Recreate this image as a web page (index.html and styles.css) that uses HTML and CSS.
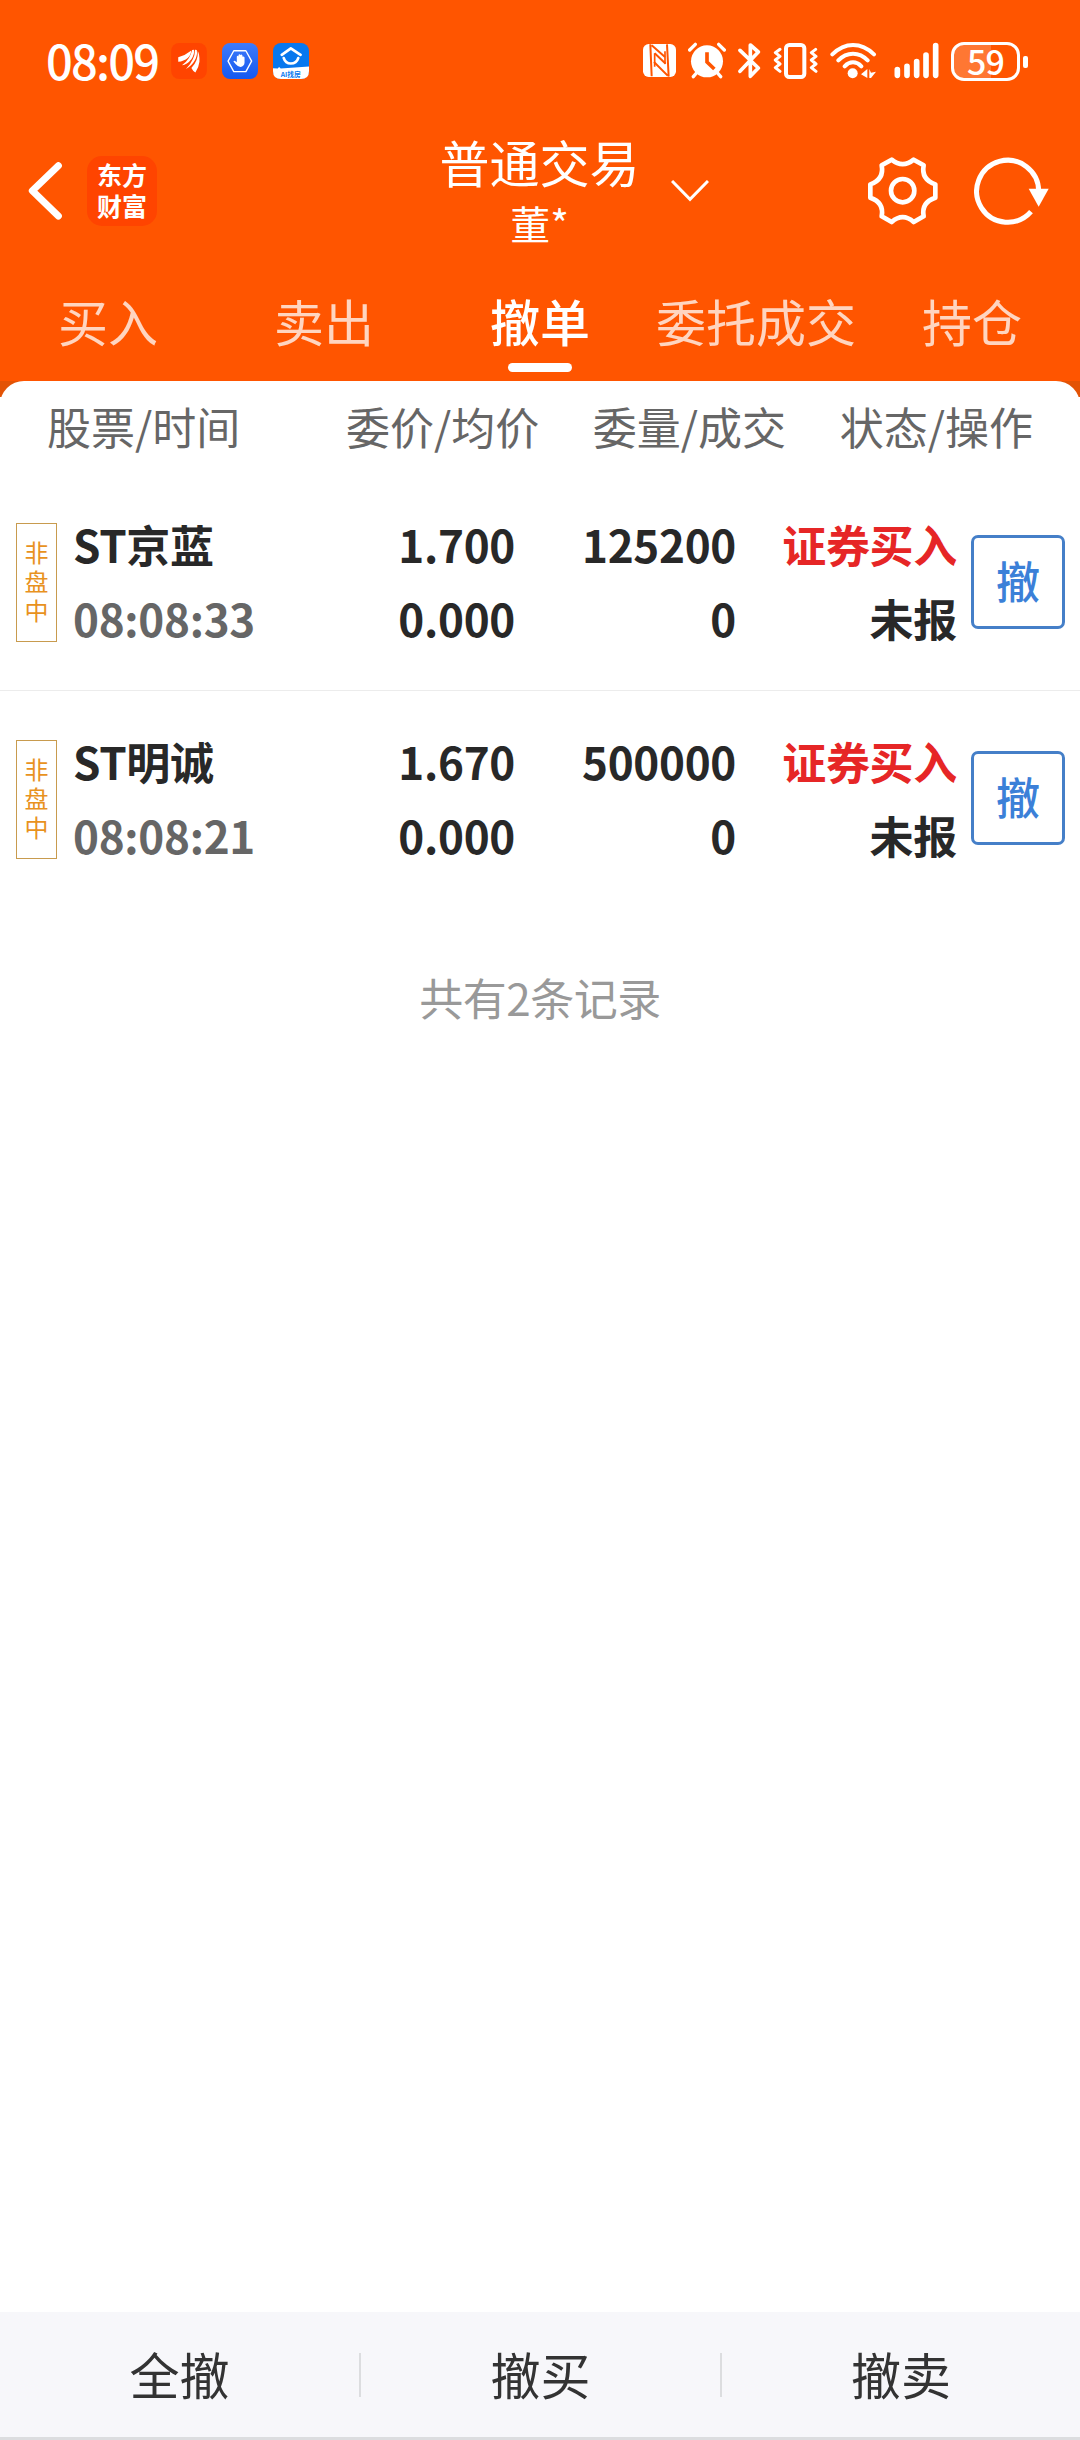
FILE: index.html
```html
<!DOCTYPE html>
<html lang="zh-CN">
  <head>
    <meta charset="UTF-8" />
    <title>普通交易 - 撤单</title>
    <link rel="stylesheet" href="styles.css">
  </head>
  <body>
    <div class="header">
      <div class="status-bar">
        <span class="clock">08:09</span>
        <div class="app-icons">
          <svg width="36" height="36" viewBox="513 71 106 107">
            <rect x="513" y="71" width="106" height="107" rx="24" fill="#ff4400" />
            <g fill="#fff">
              <path d="M534 113 Q555 108 572 94 Q573 105 563 115 Q550 126 534 127Z" />
              <path d="M575 92 L581 91 Q583 104 573 119 Q560 136 545 137 Q570 120 575 92Z" />
              <path d="M584 91 L589 92 Q592 108 583 123 Q574 139 557 148 Q584 120 584 91Z" />
              <path d="M592 95 Q598 105 597 127 Q595 145 585 159 Q577 153 573 145 Q594 125 592 95Z" />
            </g>
          </svg>
          <svg width="36" height="36" viewBox="665 71 107 107">
            <defs>
              <linearGradient id="guard" x1="0" y1="0" x2="0" y2="1">
                <stop offset="0" stop-color="#3e7bfa" />
                <stop offset="1" stop-color="#1558f0" />
              </linearGradient>
            </defs>
            <rect x="665" y="71" width="107" height="107" rx="24" fill="url(#guard)" />
            <path d="M700 94 H736 L753 125 L736 156 H700 L683 125Z" fill="none" stroke="#fff" stroke-width="4" stroke-linejoin="round" />
            <path d="M709 128 V111 q2 -4 5 0 V107 q3 -5 6 0 V107 q3 -4 6 2 V112 q4 -3 6 2 V130 Q731 141 720 142 Q711 141 706 134 L699 126 Q701 122 706 126Z" fill="#fff" />
          </svg>
          <svg width="36" height="36" viewBox="818 71 107 107">
            <rect x="818" y="71" width="107" height="107" rx="24" fill="#0878ee" />
            <path d="M818 146 L832 147 L836 142 L841 147 L925 141 V154 Q925 178 901 178 H842 Q818 178 818 154Z" fill="#fff" />
            <path d="M844 106 L871 87 L900 106 M850 116 Q855 132 871 132 Q888 132 893 116" fill="none" stroke="#fff" stroke-width="8" stroke-linecap="round" stroke-linejoin="round" />
            <text x="841" y="171" class="app-label">AI找房</text>
          </svg>
        </div>
        <div class="system-icons">
          <svg class="nfc" width="33" height="42" viewBox="69 60 99 126">
            <rect x="69" y="72" width="99" height="99" rx="17" fill="#fff" />
            <path d="M91 73 L95 169 M141 73 L146 170 M95 76 L135 111 M104 100 L137 131 M102 126 L143 167" fill="none" stroke="#ff5500" stroke-width="6" />
            <path d="M104 100 V140 M135 94 V131" stroke="#ff5500" stroke-width="5" />
          </svg>
          <svg class="alarm" width="38" height="42" viewBox="204 60 114 126">
            <circle cx="261" cy="124" r="48" fill="#fff" />
            <path d="M209 90 L226 73 M313 90 L296 73 M232 156 L220 170 M290 156 L302 170" stroke="#fff" stroke-width="10" stroke-linecap="round" />
            <path d="M261 97 V126 L283 147" fill="none" stroke="#ff5500" stroke-width="11" />
          </svg>
          <svg class="bluetooth" width="23" height="42" viewBox="354 60 69 126">
            <path d="M360 91 L415 144 L391 169 V75 L415 96 L360 154" fill="none" stroke="#fff" stroke-width="11" stroke-linecap="round" stroke-linejoin="round" />
          </svg>
          <svg class="vibrate" width="45" height="42" viewBox="458 60 135 126">
            <rect x="497" y="75" width="55" height="96" rx="10" fill="none" stroke="#fff" stroke-width="12" />
            <path d="M479 88 L465 98 L479 109 L465 120 L479 132 L465 143 L479 154 M586 88 L573 98 L587 109 L573 120 L587 132 L573 143 L587 154" fill="none" stroke="#fff" stroke-width="9" stroke-linecap="round" stroke-linejoin="round" />
          </svg>
          <svg class="wifi" width="47" height="42" viewBox="627 60 141 126">
            <path d="M634 103 Q663 75 696 75 Q730 75 759 103 M652 121 Q671 101 696 101 Q721 101 740 121 M671 139 Q682 127 696 127 Q710 127 721 139" fill="none" stroke="#fff" stroke-width="12" stroke-linecap="round" />
            <circle cx="695" cy="160" r="15" fill="#fff" />
            <path d="M720 163 L739 147 V174Z M745 147 V174 H750 L765 155 L750 158Z" fill="#fff" />
          </svg>
          <svg class="signal" width="46" height="42" viewBox="822 60 138 126">
            <path d="M832 149 V166 M861 139 V166 M890 125 V166 M918 105 V166 M947 77 V166" stroke="#fff" stroke-width="17" stroke-linecap="round" />
          </svg>
          <div class="battery"><span>59</span></div>
        </div>
      </div>

      <div class="title-bar">
        <div class="title-left">
          <svg width="34" height="58" viewBox="84 428 102 174">
            <path d="M175 439 L97 514 L175 590" fill="none" stroke="#fff" stroke-width="21" stroke-linecap="round" stroke-linejoin="round" />
          </svg>
          <div class="logo">东方<br />财富</div>
        </div>
        <div class="account">
          <div class="account-type">普通交易</div>
          <div class="account-name">董*</div>
          <svg class="chevron" width="38" height="22" viewBox="813 179 114 66">
            <path d="M816 182 L870 237 L924 182" fill="none" stroke="#fff" stroke-width="9" />
          </svg>
        </div>
        <div class="title-right">
          <svg width="72" height="70" viewBox="82 77 216 210">
            <path d="M156 88 Q189 115 222 88 L252 105 Q244 147 287 162 V202 Q244 216 252 258 L222 275 Q189 246 156 275 L126 258 Q134 216 92 202 V162 Q134 147 126 105Z" fill="none" stroke="#fff" stroke-width="14" stroke-linejoin="round" />
            <circle cx="189" cy="181" r="35" fill="none" stroke="#fff" stroke-width="14" />
          </svg>
          <svg width="75" height="70" viewBox="403 77 225 210">
            <path d="M574 244 A93 93 0 1 1 597 184" fill="none" stroke="#fff" stroke-width="15" />
            <path d="M567 175 H627 L597 229Z" fill="#fff" />
          </svg>
        </div>
      </div>

      <div class="tabs">
        <div class="tab">买入</div>
        <div class="tab">卖出</div>
        <div class="tab active">撤单</div>
        <div class="tab">委托成交</div>
        <div class="tab">持仓</div>
      </div>
    </div>

    <div class="panel-wrapper">
      <div class="panel">
        <div class="columns">
          <span>股票/时间</span>
          <span>委价/均价</span>
          <span>委量/成交</span>
          <span>状态/操作</span>
        </div>

        <div class="order">
          <div class="badge">非<br />盘<br />中</div>
          <div class="cell name">ST京蓝<span class="time">08:08:33</span></div>
          <div class="cell price">1.700<span>0.000</span></div>
          <div class="cell amount">125200<span>0</span></div>
          <div class="cell state"><b>证券买入</b><span>未报</span></div>
          <button class="cancel">撤</button>
        </div>

        <div class="order">
          <div class="badge">非<br />盘<br />中</div>
          <div class="cell name">ST明诚<span class="time">08:08:21</span></div>
          <div class="cell price">1.670<span>0.000</span></div>
          <div class="cell amount">500000<span>0</span></div>
          <div class="cell state"><b>证券买入</b><span>未报</span></div>
          <button class="cancel">撤</button>
        </div>

        <div class="total">共有2条记录</div>
      </div>
    </div>

    <div class="footer">
      <div class="action">全撤</div>
      <div class="action">撤买</div>
      <div class="action">撤卖</div>
    </div>
  </body>
</html>
```
FILE: styles.css
```css
* {
  box-sizing: border-box;
}

body {
  font-family: "Noto Sans CJK SC", sans-serif;
  margin: 0;
  width: 1080px;
  height: 2440px;
  display: flex;
  flex-direction: column;
  background: #fff;
  color: #282828;
}

svg {
  display: block;
  flex: none;
}

.header {
  height: 381px;
  background: #ff5500;
  color: #fff;
}

.status-bar {
  display: flex;
  align-items: center;
  height: 122px;
  padding: 0 52px 0 46px;
}

.clock {
  width: 125px;
  padding-bottom: 3px;
  font-size: 47px;
  font-weight: 500;
  line-height: 60px;
  letter-spacing: -1.8px;
  white-space: nowrap;
}

.app-icons {
  display: flex;
  gap: 15px;
}

.app-label {
  font-size: 20px;
  font-weight: 700;
  fill: #0878ee;
}

.system-icons {
  display: flex;
  align-items: center;
  margin-left: auto;
}

.alarm,
.bluetooth,
.vibrate,
.wifi {
  margin-left: 12px;
}

.signal {
  margin: 0 11px 0 17px;
}

.battery {
  position: relative;
  width: 69px;
  height: 39px;
  margin-right: 8px;
  border: 3px solid #fff;
  border-radius: 13px;
  background: linear-gradient(to right, #ff7733 59%, #ff5500 59%);
  font-size: 34px;
  font-weight: 500;
  line-height: 31px;
  letter-spacing: -1px;
  text-align: center;
}

.battery::after {
  content: "";
  position: absolute;
  right: -11px;
  top: 11px;
  width: 5px;
  height: 12px;
  border-radius: 2px;
  background: #fff;
}

.title-bar {
  display: flex;
  align-items: center;
  justify-content: space-between;
  height: 138px;
  padding: 0 31px 0 28px;
}

.title-left,
.title-right {
  display: flex;
  align-items: center;
  width: 300px;
}

.title-left {
  gap: 25px;
}

.title-right {
  justify-content: flex-end;
  gap: 35px;
}

.logo {
  width: 70px;
  height: 70px;
  padding-top: 3px;
  border-radius: 15px;
  background: #ff4400;
  font-size: 25px;
  font-weight: 700;
  line-height: 31px;
  text-align: center;
}

.account {
  position: relative;
  left: 1px;
  margin-top: -3px;
  text-align: center;
}

.account-type {
  font-size: 50px;
  line-height: 66px;
}

.account-name {
  font-size: 40px;
  line-height: 58px;
}

.chevron {
  position: absolute;
  left: 231px;
  top: 52px;
}

.tabs {
  display: grid;
  grid-template-columns: repeat(5, 1fr);
  height: 121px;
}

.tab {
  position: relative;
  font-size: 50px;
  line-height: 120px;
  text-align: center;
  color: #ffd5c0;
}

.tab.active {
  color: #fff;
  font-weight: 500;
}

.tab.active::after {
  content: "";
  position: absolute;
  left: 76px;
  top: 103px;
  width: 64px;
  height: 9px;
  border-radius: 5px;
  background: #fff;
}

.panel-wrapper {
  flex: 1;
  background: linear-gradient(#e35305 16px, #fff 16px);
}

.panel {
  height: 100%;
  border-radius: 24px 24px 0 0;
  background: #fff;
}

.columns {
  display: flex;
  justify-content: space-between;
  height: 94px;
  padding: 0 47px 0 47px;
  font-size: 44px;
  line-height: 91px;
  color: #666;
}

.columns span:nth-child(2) {
  margin-left: 52px;
}

.order {
  display: grid;
  grid-template-columns: 41px 200px 258px 221px 221px 94px;
  align-items: center;
  height: 216px;
  padding-left: 16px;
  border-bottom: 1px solid #ececec;
}

.order:nth-child(3) {
  border-bottom: none;
}

.badge {
  height: 119px;
  padding-top: 13px;
  border: 1px solid #c89b4e;
  font-size: 24px;
  line-height: 29px;
  text-align: center;
  color: #e8921e;
}

.cell {
  padding-bottom: 3px;
  font-size: 44px;
  font-weight: 700;
  line-height: 74px;
  letter-spacing: -0.3px;
  text-align: right;
  white-space: nowrap;
}

.cell span {
  display: block;
}

.name {
  padding-left: 16px;
  text-align: left;
}

.name .time {
  color: #666;
}

.state b {
  font-weight: 700;
  color: #e62626;
}

.cancel {
  width: 94px;
  height: 94px;
  margin: -2px 0 0 14px;
  padding: 0 0 3px;
  border: 3px solid #457fc8;
  border-radius: 7px;
  background: #fff;
  color: #3b80d8;
  font-family: inherit;
  font-size: 44px;
  font-weight: 500;
  line-height: 85px;
}

.total {
  padding-top: 57px;
  font-size: 44px;
  line-height: 66px;
  letter-spacing: -0.5px;
  text-align: center;
  color: #999;
}

.footer {
  display: grid;
  grid-template-columns: 359px 361px 360px;
  align-items: center;
  height: 128px;
  border-bottom: 3px solid #dcdddf;
  background: #f7f7fa;
}

.action {
  height: 44px;
  font-size: 50px;
  line-height: 40px;
  text-align: center;
  color: #333;
}

.action + .action {
  border-left: 2px solid #dcdddf;
}
```
